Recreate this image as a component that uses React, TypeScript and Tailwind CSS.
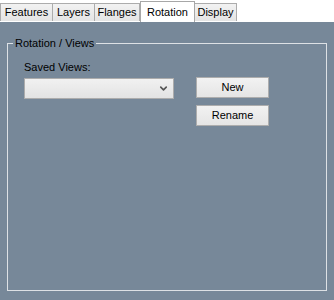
import { ChevronDown } from 'lucide-react';

const tabs = ['Features', 'Layers', 'Flanges', 'Rotation', 'Display'];
const widths: Record<string, string> = {
  Features: 'w-[53px]',
  Layers: 'w-[43px]',
  Flanges: 'w-[46px]',
  Rotation: 'w-[55px]',
  Display: 'w-[43px]',
};

function Tab({ label, active }: { label: string; active: boolean }) {
  if (active) {
    return (
      <div
        className={`${widths[label]} h-[21px] -mb-px bg-white border border-b-0 border-[#a7a7a7] flex items-center justify-center text-black z-10`}
      >
        {label}
      </div>
    );
  }
  return (
    <div
      className={`${widths[label]} h-[18px] bg-gradient-to-b from-[#f2f2f2] to-[#e4e4e4] border border-b-0 border-[#acacac] -ml-px first:ml-0 flex items-center justify-center text-black`}
    >
      {label}
    </div>
  );
}

function Button({ children }: { children: React.ReactNode }) {
  return (
    <button className="w-[73px] h-[21px] bg-gradient-to-b from-[#f2f2f2] to-[#e5e5e5] border border-[#adadad] text-black text-[11px] leading-none">
      {children}
    </button>
  );
}

export default function App() {
  return (
    <div className="w-[334px] h-[300px] bg-white flex flex-col text-[11px] font-['Liberation_Sans',Arial,sans-serif] overflow-hidden">
      {/* Tabs */}
      <div className="h-[21px] flex items-end">
        {tabs.map((t) => (
          <Tab key={t} label={t} active={t === 'Rotation'} />
        ))}
      </div>

      {/* Page */}
      <div className="flex-1 bg-[#778899] border-t border-white flex flex-col px-[7px] pt-[14px] pb-[9px]">
        <fieldset className="flex-1 border border-[#dde1e5] flex">
          <legend className="ml-[5px] px-[2px] text-black leading-[14px]">Rotation / Views</legend>

          <div className="flex pl-[16px]">
            <div className="flex flex-col pt-[11px]">
              <span className="text-black leading-[13px]">Saved Views:</span>
              <div className="mt-[4px] w-[150px] h-[21px] bg-gradient-to-b from-[#f1f1f1] to-[#e3e3e3] border border-[#acacac] flex items-center justify-end pr-[4px]">
                <ChevronDown className="w-[11px] h-[11px] text-[#555]" strokeWidth={3.5} />
              </div>
            </div>

            <div className="flex flex-col gap-[7px] ml-[22px] pt-[27px]">
              <Button>New</Button>
              <Button>Rename</Button>
            </div>
          </div>
        </fieldset>
      </div>
    </div>
  );
}
